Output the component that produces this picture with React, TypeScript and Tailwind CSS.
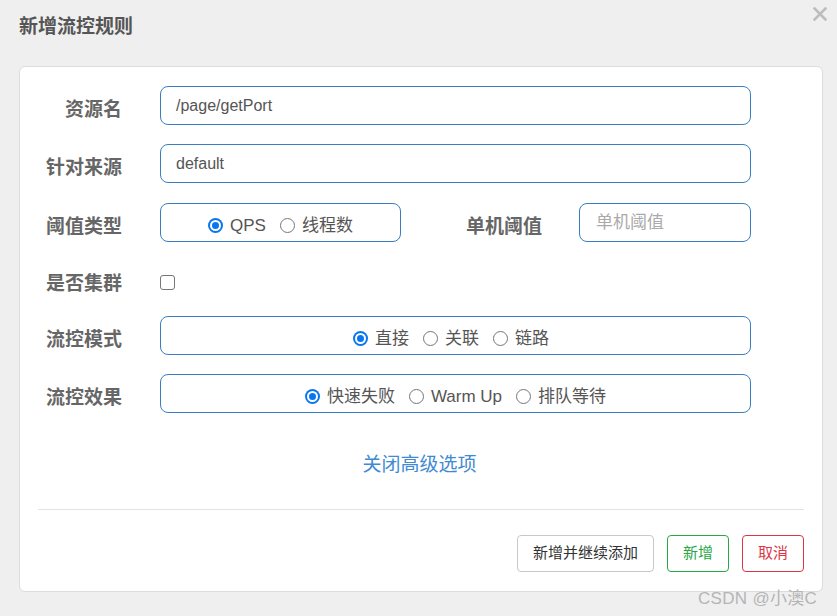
import React from "react";

const font = "font-['Liberation_Sans','Noto_Sans_CJK_SC',sans-serif]";

type RadioItem = { label: string; checked?: boolean };

const Radio = ({ item }: { item: RadioItem }) => (
  <span className="flex items-center gap-[7px]">
    {item.checked ? (
      <span className="w-[15px] h-[15px] rounded-full bg-[#0a75f0] flex items-center justify-center">
        <span className="w-[11px] h-[11px] rounded-full border-[2px] border-white bg-[#0a75f0]" />
      </span>
    ) : (
      <span className="w-[15px] h-[15px] rounded-full border border-[#767676] bg-white" />
    )}
    <span>{item.label}</span>
  </span>
);

const RadioBox = ({ items, className }: { items: RadioItem[]; className: string }) => (
  <div
    className={`h-[39px] rounded-[8px] border border-[#3a7ec2] flex items-center justify-center gap-[14px] pt-[6px] text-[17px] text-[#555] ${className}`}
  >
    {items.map((it) => (
      <Radio key={it.label} item={it} />
    ))}
  </div>
);

const Label = ({ text }: { text: string }) => (
  <div className="w-[102px] shrink-0 text-right text-[19px] font-bold text-[#666] mr-[38px] pt-[10px]">
    {text}
  </div>
);

export default function App() {
  return (
    <div className={`relative w-[837px] h-[616px] bg-[#efefef] overflow-hidden ${font}`}>
      {/* header */}
      <div className="flex items-start justify-between h-[66px]">
        <h1 className="pl-[19px] pt-[13px] text-[19px] font-bold text-[#555]">新增流控规则</h1>
        <svg width="14" height="14" viewBox="0 0 14 14" className="mt-[7px] mr-[10px]">
          <path d="M1.5 1.5 L12.5 12.5 M12.5 1.5 L1.5 12.5" stroke="#bdbdbd" strokeWidth="2.6" strokeLinecap="square" />
        </svg>
      </div>

      {/* card */}
      <div className="ml-[19px] w-[804px] h-[526px] bg-white border border-[#dcdcdc] rounded-[6px] pt-[19px] flex flex-col">
        <div className="flex flex-col gap-[19px]">
          <div className="flex items-center h-[39px]">
            <Label text="资源名" />
            <div className="w-[591px] h-[39px] rounded-[8px] border border-[#3a7ec2] flex items-center px-[15px] text-[16px] text-[#555]">
              /page/getPort
            </div>
          </div>

          <div className="flex items-center h-[39px]">
            <Label text="针对来源" />
            <div className="w-[591px] h-[39px] rounded-[8px] border border-[#3a7ec2] flex items-center px-[15px] text-[16px] text-[#555]">
              default
            </div>
          </div>

          <div className="flex items-center h-[39px] mt-[1px]">
            <Label text="阈值类型" />
            <RadioBox
              className="w-[241px]"
              items={[{ label: "QPS", checked: true }, { label: "线程数" }]}
            />
            <div className="w-[141px] text-right text-[19px] font-bold text-[#666] mr-[37px] pt-[10px]">单机阈值</div>
            <div className="w-[172px] h-[39px] rounded-[8px] border border-[#3a7ec2] flex items-center px-[16px] text-[17px] text-[#aaa]">
              单机阈值
            </div>
          </div>

          <div className="flex items-center h-[36px]">
            <Label text="是否集群" />
            <span className="w-[15px] h-[15px] mt-[6px] rounded-[3px] border border-[#767676] bg-white" />
          </div>

          <div className="flex items-center h-[39px]">
            <Label text="流控模式" />
            <RadioBox
              className="w-[591px] pr-[9px]"
              items={[{ label: "直接", checked: true }, { label: "关联" }, { label: "链路" }]}
            />
          </div>

          <div className="flex items-center h-[39px]">
            <Label text="流控效果" />
            <RadioBox
              className="w-[591px]"
              items={[{ label: "快速失败", checked: true }, { label: "Warm Up" }, { label: "排队等待" }]}
            />
          </div>
        </div>

        <div className="mt-[40px] h-[24px] text-center text-[19px] leading-[24px] text-[#3f8ad2] pr-[3px]">
          关闭高级选项
        </div>

        <div className="mx-[18px] mt-[32px] border-t border-[#e3e3e3]" />

        <div className="flex justify-end gap-[13px] mx-[18px] mt-[25px]">
          <button className="h-[37px] px-[15px] rounded-[4px] border border-[#c8c8c8] text-[15px] text-[#333] bg-white">
            新增并继续添加
          </button>
          <button className="h-[37px] w-[62px] rounded-[4px] border border-[#28a745] text-[15px] text-[#28a745] bg-white">
            新增
          </button>
          <button className="h-[37px] w-[62px] rounded-[4px] border border-[#dc3545] text-[15px] text-[#dc3545] bg-white">
            取消
          </button>
        </div>
      </div>

      {/* watermark */}
      <div className="absolute left-[698px] top-[586px] text-[17px] text-[#b5b5b5] tracking-[0.3px]">
        CSDN @小澳C
      </div>
    </div>
  );
}
